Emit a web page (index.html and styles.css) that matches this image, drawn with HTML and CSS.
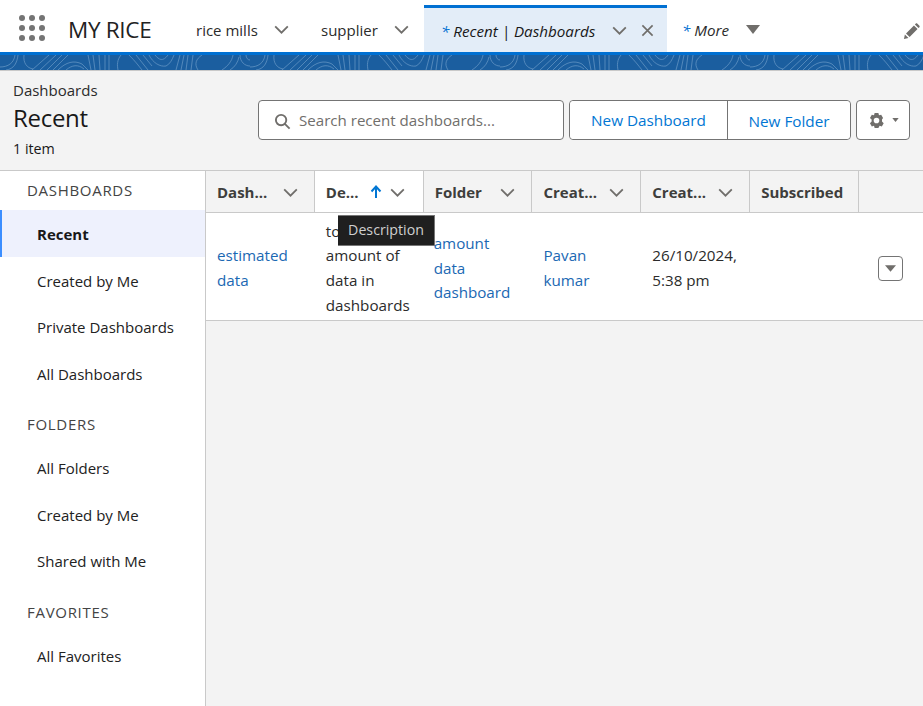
FILE: index.html
```html
<!DOCTYPE html>
<html lang="en">
<head>
  <meta charset="UTF-8">
  <meta name="viewport" content="width=device-width, initial-scale=1.0">
  <title>Recent | Dashboards</title>
  <link rel="stylesheet" href="styles.css">
</head>
<body>
  <header class="nav">
    <div class="launcher">
      <i></i><i></i><i></i><i></i><i></i><i></i><i></i><i></i><i></i>
    </div>
    <span class="app-name">MY RICE</span>

    <div class="tab tab-rice">
      <span>rice mills</span>
      <svg class="chev" viewBox="0 0 16 10"><path d="M1 1.500 8 8.500 15 1.500"/></svg>
    </div>
    <div class="tab tab-supplier">
      <span>supplier</span>
      <svg class="chev" viewBox="0 0 16 10"><path d="M1 1.500 8 8.500 15 1.500"/></svg>
    </div>
    <div class="tab tab-active">
      <em><b>*</b> Recent | Dashboards</em>
      <svg class="chev" viewBox="0 0 16 10"><path d="M1 1.500 8 8.500 15 1.500"/></svg>
      <svg class="close" viewBox="0 0 14 14"><path d="M1.500 1.500 12.500 12.500M12.500 1.500 1.500 12.500"/></svg>
    </div>
    <div class="tab tab-more">
      <em><b>*</b> More</em>
      <svg class="caret" viewBox="0 0 14 9"><path d="M0 0H14L7 9Z"/></svg>
    </div>
    <svg class="pencil" viewBox="0 0 18 18"><path d="M1 17 2 12.200 5.800 16ZM3.200 11 11.600 2.600 15.400 6.400 7 14.800ZM12.600 1.600 13.600.6C14 .2 14.600.2 15 .6L17.400 3C17.800 3.400 17.800 4 17.400 4.400L16.400 5.400Z"/></svg>
  </header>

  <div class="band">
    <svg width="100%" height="15">
      <defs>
        <pattern id="topo" width="250" height="15" patternUnits="userSpaceOnUse">
          <path class="topo-line" d="M0 12C8 12 14 8 15 0M6 15C14 14 17 8 18 0M24 0C23 8 27 13 33 14M32 15 49 0M40 15 56 0M47 15 62 0M53 15 68 0M58 15C66 7 74 5 82 9 84 11 86 13 88 15M66 15C72 10 78 9 84 14M88 0 91 15M93 0 95 15M99 0 100 15M105 0V15M109 0V15M121 0C117 5 117 10 118 15M129 0C135 6 138 10 142 15M136 0 148 15M143 0 152 11M149 0C153 8 160 12 166 11 170 9 172 5 174 0M155 0C159 5 163 7 168 0M176 15 180 0M181 15 184 0M186 15 188 0M191 15 193 0M198 15C194 9 196 4 202 0M222 15C228 11 232 6 233 0M230 15C235 12 238 7 239 2M240 0C240 7 245 11 250 11M246 0C246 3 248 5 250 5" />
        </pattern>
      </defs>
      <rect width="100%" height="15" fill="url(#topo)"/>
    </svg>
  </div>

  <section class="page-head">
    <div class="titles">
      <div class="crumb">Dashboards</div>
      <h1>Recent</h1>
      <div class="count">1 item</div>
    </div>
    <div class="actions">
      <div class="search">
        <svg viewBox="0 0 18 18"><circle cx="7.500" cy="7.500" r="5.500"/><path d="M11.500 11.500 16.500 16.500"/></svg>
        <span>Search recent dashboards...</span>
      </div>
      <div class="btn-group">
        <button class="btn-dash">New Dashboard</button>
        <button class="btn-folder">New Folder</button>
      </div>
      <button class="btn-gear">
        <svg class="gear" viewBox="0 0 24 24"><path fill-rule="evenodd" d="M9 0h6l1 3.600 3.500-1 3 5.200L20.800 10.500v3l2.700 2.700-3 5.200-3.500-1L15 24H9l-1-3.600-3.500 1-3-5.200 2.700-2.700v-3L1.500 7.800l3-5.200 3.500 1ZM12 7.500a4.500 4.500 0 1 0 0 9 4.500 4.500 0 0 0 0-9Z"/></svg>
        <svg class="mini-caret" viewBox="0 0 8 5"><path d="M0 0H8L4 5Z"/></svg>
      </button>
    </div>
  </section>

  <div class="content">
    <aside class="side">
      <h2>DASHBOARDS</h2>
      <ul>
        <li class="current">Recent</li>
        <li>Created by Me</li>
        <li>Private Dashboards</li>
        <li>All Dashboards</li>
      </ul>
      <h2>FOLDERS</h2>
      <ul>
        <li>All Folders</li>
        <li>Created by Me</li>
        <li>Shared with Me</li>
      </ul>
      <h2>FAVORITES</h2>
      <ul>
        <li>All Favorites</li>
      </ul>
    </aside>

    <main class="list">
      <div class="thead">
        <div class="th"><span>Dash...</span><svg class="chev" viewBox="0 0 16 10"><path d="M1 1.500 8 8.500 15 1.500"/></svg></div>
        <div class="th th-sorted">
          <span>De...</span>
          <svg class="arrow" viewBox="0 0 12 14"><path d="M6 13V2M1.500 6.500 6 1.500 10.500 6.500"/></svg>
          <svg class="chev" viewBox="0 0 16 10"><path d="M1 1.500 8 8.500 15 1.500"/></svg>
        </div>
        <div class="th"><span>Folder</span><svg class="chev" viewBox="0 0 16 10"><path d="M1 1.500 8 8.500 15 1.500"/></svg></div>
        <div class="th"><span>Creat...</span><svg class="chev" viewBox="0 0 16 10"><path d="M1 1.500 8 8.500 15 1.500"/></svg></div>
        <div class="th"><span>Creat...</span><svg class="chev" viewBox="0 0 16 10"><path d="M1 1.500 8 8.500 15 1.500"/></svg></div>
        <div class="th"><span>Subscribed</span></div>
        <div class="th th-last"></div>
      </div>
      <div class="row">
        <div class="td"><a>estimated data</a></div>
        <div class="td">total amount of data in dashboards</div>
        <div class="td td-folder"><a>amount data dashboard</a></div>
        <div class="td"><a>Pavan kumar</a></div>
        <div class="td">26/10/2024, 5:38 pm</div>
        <div class="td"></div>
        <div class="td td-menu">
          <button class="row-menu"><svg viewBox="0 0 12 7"><path d="M0 0H12L6 7Z"/></svg></button>
        </div>
      </div>
      <div class="tooltip">Description</div>
    </main>
  </div>
</body>
</html>
```

FILE: styles.css
```css
* {
  margin: 0;
  padding: 0;
  box-sizing: border-box;
}

html, body {
  height: 100%;
  overflow: hidden;
}

body {
  background: #f3f3f3;
  color: #181818;
  font-family: "Open Sans", "Noto Sans", Arial, sans-serif;
  font-size: 15px;
}

button {
  font-family: inherit;
  background: #fff;
  cursor: pointer;
}

svg {
  display: block;
  flex: none;
}

.chev {
  width: 15px;
  height: 9px;
  fill: none;
  stroke: #706e6b;
  stroke-width: 2;
}

/* top nav */
.nav {
  height: 52px;
  background: #fff;
  display: flex;
  align-items: stretch;
}

.launcher {
  width: 27px;
  margin: 15px 0 0 19px;
  height: 26px;
  display: grid;
  grid-template-columns: repeat(3, 6px);
  grid-template-rows: repeat(3, 6px);
  gap: 4px;
}

.launcher i {
  background: #747474;
  border-radius: 50%;
}

.app-name {
  width: 128px;
  margin-left: 22px;
  font-size: 22.500px;
  line-height: 60px;
  color: #222;
  letter-spacing: -0.3px;
}

.tab {
  display: flex;
  align-items: center;
  font-size: 15px;
  padding-top: 7px;
  color: #2b2b2b;
}

.tab-rice {
  width: 125px;
}

.tab-rice .chev {
  margin-left: 16px;
}

.tab-supplier {
  width: 103px;
}

.tab-supplier .chev {
  margin-left: 16px;
}

.tab-active {
  width: 243px;
  background: #e3edf8;
  border-top: 3px solid #0070d2;
  margin-top: 5px;
  padding: 1px 0 0 17px;
  color: #181818;
}

.tab-active em, .tab-more em {
  white-space: nowrap;
  font-size: 15.200px;
}

.tab em b {
  font-weight: 400;
  color: #0070d2;
}

.tab-active .chev {
  margin-left: 17px;
}

.close {
  width: 13px;
  height: 13px;
  margin-left: 14px;
  fill: none;
  stroke: #706e6b;
  stroke-width: 1.800;
}

.tab-more {
  flex: 1;
  padding-left: 15px;
}

.caret {
  width: 14px;
  height: 9px;
  margin: 0 0 0 17px;
  fill: #706e6b;
}

.pencil {
  width: 17px;
  height: 17px;
  margin: 23px 3px 0 0;
  fill: #706e6b;
}

/* blue band */
.band {
  height: 18px;
  border-top: 3px solid #0070d2;
  background: #1b5e9f;
  box-shadow: 0 1px 0 #c9c9c9;
}

.topo-line {
  fill: none;
  stroke: #5f92c2;
  stroke-width: 0.800;
}

/* page header */
.page-head {
  height: 101px;
  padding: 11px 13px 0;
  display: flex;
  justify-content: space-between;
  border-bottom: 1px solid #c9c9c9;
}

.crumb {
  font-size: 15px;
  line-height: 18px;
  color: #2b2b2b;
}

h1 {
  font-size: 24px;
  font-weight: 400;
  line-height: 33px;
  margin-top: 2px;
  letter-spacing: -0.3px;
}

.count {
  font-size: 14.300px;
  line-height: 18px;
  margin-top: 6px;
}

.actions {
  display: flex;
  gap: 5px;
  margin-top: 19px;
  height: 40px;
}

.search {
  width: 306px;
  background: #fff;
  border: 1px solid #747474;
  border-radius: 4px;
  display: flex;
  align-items: center;
  padding-left: 15px;
  color: #706e6b;
  font-size: 15.100px;
}

.search svg {
  width: 17px;
  height: 17px;
  margin: 3px 8px 0 0;
  fill: none;
  stroke: #706e6b;
  stroke-width: 2;
}

.btn-group {
  display: flex;
  width: 282px;
  background: #fff;
  border: 1px solid #747474;
  border-radius: 4px;
}

.btn-group button {
  border: 0;
  border-radius: 4px;
  color: #0176d3;
  font-size: 15.300px;
}

.btn-dash {
  width: 158px;
  border-right: 1px solid #747474 !important;
  border-radius: 4px 0 0 4px !important;
  padding-bottom: 1px;
}

.btn-folder {
  flex: 1;
  padding-top: 1px;
}

.btn-gear {
  width: 54px;
  border: 1px solid #747474;
  border-radius: 4px;
  display: flex;
  align-items: center;
  padding-left: 12px;
}

.gear {
  width: 15px;
  height: 15px;
  fill: #706e6b;
}

.mini-caret {
  width: 7px;
  height: 4px;
  margin-left: 8px;
  fill: #706e6b;
}

/* body */
.content {
  display: flex;
  height: 536px;
}

.side {
  width: 206px;
  background: #fff;
  border-right: 1px solid #c9c9c9;
}

.side h2 {
  font-size: 15px;
  font-weight: 400;
  letter-spacing: 0.7px;
  color: #444;
  line-height: 19px;
  padding: 10px 0 0 27px;
  height: 39px;
}

.side ul {
  list-style: none;
  margin-bottom: 9px;
}

.side li {
  height: 46.500px;
  line-height: 48px;
  padding-left: 37px;
  font-size: 15px;
  color: #222;
}

.side li.current {
  background: #eef1fd;
  font-weight: 700;
  color: #181818;
  border-left: 2px solid #3b8eff;
  padding-left: 35px;
}

.list {
  flex: 1;
  position: relative;
}

.thead, .row {
  display: grid;
  grid-template-columns: repeat(6, 108.840px) 1fr;
}

.thead {
  height: 42px;
  border-bottom: 1px solid #c9c9c9;
}

.th {
  display: flex;
  align-items: center;
  justify-content: space-between;
  padding: 1px 16px 0 11px;
  border-right: 1px solid #c9c9c9;
  font-weight: 700;
  font-size: 15px;
  color: #3e3e3c;
}

.th-sorted {
  background: #fff;
  justify-content: flex-start;
}

.th-sorted .arrow {
  margin-left: 11px;
}

.th-sorted .chev {
  margin-left: 8px;
}

.th-last {
  border-right: 0;
}

.arrow {
  width: 12px;
  height: 14px;
  fill: none;
  stroke: #0176d3;
  stroke-width: 2;
}

.row {
  height: 108px;
  padding-top: 3px;
  background: #fff;
  border-bottom: 1px solid #c9c9c9;
}

.td {
  display: flex;
  align-items: center;
  padding: 0 11px 0 11px;
  font-size: 15.200px;
  line-height: 24.700px;
  color: #2b2b2b;
}

.td a {
  color: #1b68b3;
}

.td-folder {
  padding-left: 10px;
  padding-right: 20px;
}

.td-menu {
  justify-content: flex-end;
  padding-right: 20px;
}

.row-menu {
  width: 25px;
  height: 25px;
  border: 1px solid #747474;
  border-radius: 4px;
  display: flex;
  align-items: center;
  justify-content: center;
}

.row-menu svg {
  width: 11px;
  height: 7px;
  fill: #706e6b;
}

.tooltip {
  position: absolute;
  left: 132px;
  top: 44px;
  width: 97px;
  height: 31px;
  background: #1f1f1f;
  border: 1px solid #767676;
  border-width: 1px 1px 1px 0;
  color: #cfcfcf;
  font-size: 14.200px;
  line-height: 27px;
  text-align: center;
}
```
